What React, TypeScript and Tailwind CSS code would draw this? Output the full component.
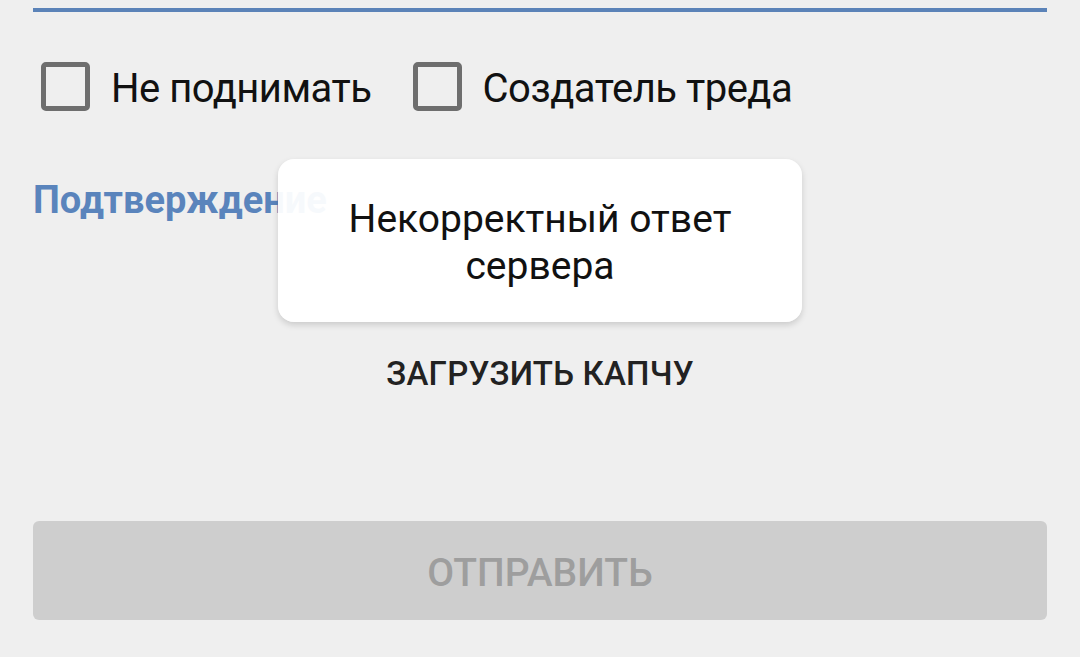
function Checkbox({ label }: { label: string }) {
  return (
    <label className="flex items-center gap-[21px]">
      <span className="h-[49px] w-[49px] shrink-0 rounded-[5px] border-[5px] border-[#6e6e6e]" />
      <span className="pt-[4px] text-[40px] leading-[45px] tracking-[-0.5px] text-[#111]">{label}</span>
    </label>
  );
}

export default function App() {
  return (
    <div
      className="relative h-[657px] w-[1080px] overflow-hidden bg-[#efefef] px-[33px] pt-[8px]"
      style={{ fontFamily: 'Roboto, "Noto Sans", sans-serif' }}
    >
      <div className="h-[4px] bg-[#5b83b8]" />

      <div className="mt-[50px] flex items-center gap-[41px] pl-[8px]">
        <Checkbox label="Не поднимать" />
        <Checkbox label="Создатель треда" />
      </div>

      <div className="mt-[67px] text-[38px] font-bold leading-[44px] text-[#5a84bc]">
        Подтверждение
      </div>

      <div className="mt-[132px] text-center text-[33px] font-medium leading-[39px] tracking-[0.2px] text-[#222]">
        ЗАГРУЗИТЬ КАПЧУ
      </div>

      <button className="mt-[128px] flex h-[99px] w-full items-center justify-center rounded-[6px] bg-[#cecece] pt-[4px] text-[39px] font-medium leading-[46px] text-[#9e9e9e]">
        ОТПРАВИТЬ
      </button>

      {/* toast */}
      <div className="absolute left-[278px] top-[159px] w-[524px] rounded-[16px] bg-white/95 px-6 pb-[32px] pt-[37px] text-center text-[39px] leading-[47px] text-[#111] shadow-[0_3px_6px_rgba(0,0,0,0.15)]">
        Некорректный ответ
        <br />
        сервера
      </div>
    </div>
  );
}
